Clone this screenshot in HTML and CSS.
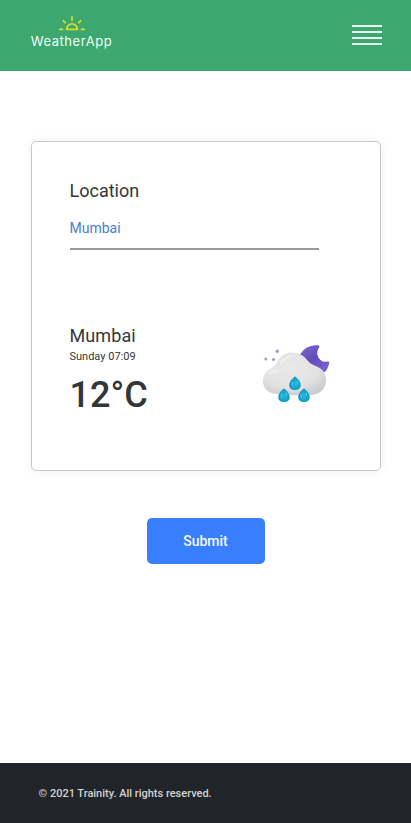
FILE: index.html
```html
<!DOCTYPE html>
<html lang="en">
<head>
<meta charset="utf-8">
<meta name="viewport" content="width=device-width, initial-scale=1">
<title>WeatherApp</title>
<link rel="stylesheet" href="styles.css">
</head>
<body>
<header class="header">
  <div class="brand">
    <svg class="brand-icon" viewBox="0 0 26 15" aria-hidden="true">
      <path d="M0 13.3h4.3M6.7 13.3h12.6M21.7 13.3H26M7.8 13.1a5.2 5.2 0 0 1 10.4 0M13 .3v4.4M3.8 4.400l3 2.800M22.200 4.400l-3 2.800"/>
    </svg>
    <span class="brand-name">WeatherApp</span>
  </div>
  <button class="menu" aria-label="Menu"><span></span><span></span><span></span><span></span></button>
</header>
<main class="main">
  <section class="card">
    <label class="label" for="location">Location</label>
    <input class="field" id="location" type="text" value="Mumbai">
    <div class="weather">
      <div class="reading">
        <h1 class="city">Mumbai</h1>
        <p class="time">Sunday 07:09</p>
        <p class="temp">12°C</p>
      </div>
      <svg class="weather-icon" viewBox="0 0 70 62" aria-hidden="true">
        <defs>
          <radialGradient id="cloud" cx=".42" cy=".35" r=".7">
            <stop offset="0" stop-color="#e9e9e9"/>
            <stop offset=".65" stop-color="#e2e2e3"/>
            <stop offset="1" stop-color="#cccbd0"/>
          </radialGradient>
          <linearGradient id="moon" x1="0" y1="0" x2=".7" y2="1">
            <stop offset="0" stop-color="#7c68d0"/>
            <stop offset=".55" stop-color="#614bbb"/>
            <stop offset="1" stop-color="#7962cf"/>
          </linearGradient>
          <radialGradient id="rain" cx=".55" cy=".55" r=".6">
            <stop offset="0" stop-color="#2cb6dc"/>
            <stop offset=".6" stop-color="#16a3ce"/>
            <stop offset="1" stop-color="#1389b6"/>
          </radialGradient>
          <path id="drop" d="M0-7C2-5.600 5.700-2.200 5.700 1.400C5.700 4.600 3.500 6.400 0 6.400S-5.700 4.600-5.700 1.400C-5.700-2.200-2-5.600 0-7Z"/>
        </defs>
        <path fill="url(#moon)" d="M39 11C42 4.500 49 .8 56.500 1.200C58.800 1.400 58.800 2.500 57.800 4C55.700 7 55.700 11.500 58.200 14.500C60.500 17.800 63.500 18.300 66.500 17.500C68 17.200 68.400 17.900 68.100 19.300C67.500 22.500 66.500 25.500 64 28L50 26Z"/>
        <path fill="url(#cloud)" d="M15.500 50C7.500 49.500 2 44.500 2 37.500C2 31 5 27 10 24.500C14 22.500 15 20 17 16.500C20 11 25 8.500 31 8.500C38.500 8.500 43 12 47 17C51 21.500 55 21.500 59.500 24.500C63 27 65 31 65 36C65 44.500 59.500 50.500 50 51C36 52 28 51 15.500 50Z"/>
        <path d="M8 30q3-3 8-3M20 19q4-6 10-7" fill="none" stroke="#f6f6f6" stroke-width="2" stroke-linecap="round" opacity=".65"/>
        <g fill="url(#rain)">
          <use href="#drop" x="34" y="39.500"/>
          <use href="#drop" x="23" y="51.500"/>
          <use href="#drop" x="43" y="51.500"/>
        </g>
        <g fill="none" stroke="#65cfe6" stroke-width=".8" stroke-linecap="round">
          <path d="M31.500 38q-1 2 0 4M36.500 37v2M20.500 50q-1 2 0 4M25.500 49v2M40.500 50q-1 2 0 4M45.500 49v2"/>
        </g>
        <g fill="#a49ad0">
          <circle cx="4.800" cy="15" r="1.500"/>
          <circle cx="12.500" cy="15.500" r="1.600"/>
          <circle cx="16.300" cy="7.300" r="1.700"/>
        </g>
      </svg>
    </div>
  </section>
  <button class="submit">Submit</button>
</main>
<footer class="footer">© 2021 Trainity. All rights reserved.</footer>
</body>
</html>
```
FILE: styles.css
```css
* {
  box-sizing: border-box;
}

body {
  display: flex;
  flex-direction: column;
  height: 823px;
  margin: 0;
  background: #fff;
  color: #333639;
  font-family: Roboto, sans-serif;
}

.header {
  display: flex;
  justify-content: space-between;
  height: 71px;
  padding: 16px 29px 0 30px;
  background: #3da770;
}

.brand {
  display: flex;
  flex-direction: column;
  align-items: center;
  width: 83px;
}

.brand-icon {
  display: block;
  width: 26px;
  height: 15px;
  fill: none;
  stroke: #d5dd2c;
  stroke-width: 1.8;
}

.brand-name {
  color: #effff6;
  font: 400 13px/20px Inter, sans-serif;
  letter-spacing: 0.55px;
  white-space: nowrap;
}

.menu {
  display: flex;
  flex-direction: column;
  gap: 4px;
  width: 30px;
  height: 21px;
  margin: 9px 0 0;
  padding: 0;
  border: 0;
  background: none;
}

.menu span {
  width: 30px;
  height: 2px;
  background: #e9fff3;
}

.main {
  display: flex;
  flex: 1;
  flex-direction: column;
  align-items: center;
  padding-top: 70px;
}

.card {
  display: flex;
  flex-direction: column;
  width: 350px;
  height: 330px;
  padding: 37px 38px 0;
  border: 1px solid #c8c8c8;
  border-radius: 5px;
  box-shadow: 0 0 10px rgba(0, 0, 0, 0.07);
}

.label {
  font-size: 18px;
  line-height: 24px;
}

.field {
  width: 249px;
  height: 47px;
  padding: 5px 0 0;
  border: 0;
  border-bottom: 2px solid #999;
  background: none;
  color: #4480d2;
  font: 400 14px/20px Roboto, sans-serif;
  outline: 0;
}

.weather {
  display: flex;
  justify-content: space-between;
  margin-top: 74px;
}

.city,
.time,
.temp {
  margin: 0;
}

.city {
  font-size: 18px;
  font-weight: 400;
  line-height: 24px;
  letter-spacing: 0.1px;
}

.time {
  margin-top: 1px;
  font-size: 11px;
  line-height: 16px;
}

.temp {
  margin-top: 8px;
  font-size: 36px;
  font-weight: 500;
  line-height: 44px;
}

.weather-icon {
  width: 70px;
  height: 62px;
  margin: 20px 11px 0 0;
}

.submit {
  width: 118px;
  height: 46px;
  margin-top: 47px;
  padding: 0;
  border: 0;
  border-radius: 5px;
  background: #397eff;
  color: #f4faff;
  font: 500 14px/20px Roboto, sans-serif;
}

.footer {
  height: 60px;
  padding-left: 38.5px;
  background: #212429;
  color: #d2d3d4;
  font-size: 11px;
  font-weight: 500;
  line-height: 61px;
}
```
